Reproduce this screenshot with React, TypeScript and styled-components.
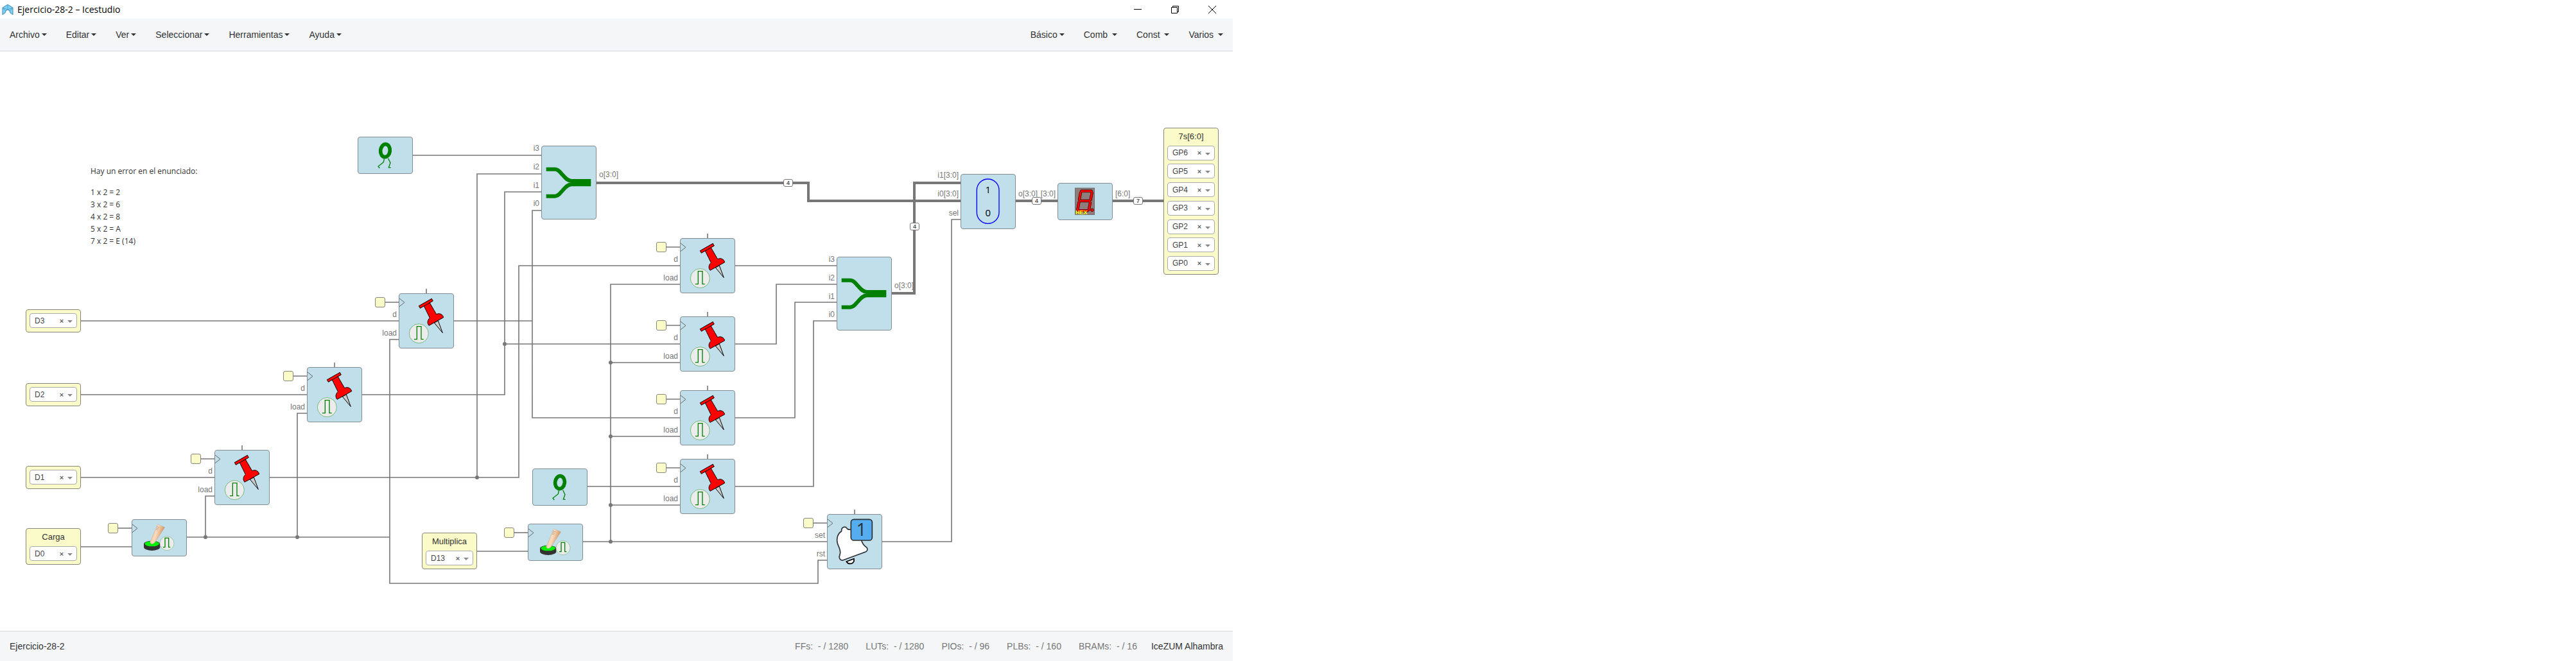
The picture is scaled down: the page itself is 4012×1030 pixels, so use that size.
import React from "react";
import styled, { createGlobalStyle } from "styled-components";

const WIRE = "#777777";
const SANS = '"Liberation Sans", Arial, sans-serif';
const HUMANIST = '"Open Sans", "Noto Sans", sans-serif';

const GlobalStyle = createGlobalStyle`
  * { box-sizing: border-box; }
  body { margin: 0; background: #ffffff; color: #333333; font-family: ${SANS}; font-size: 14px; }
  button, select { font: inherit; color: inherit; margin: 0; padding: 0; border: 0; background: none; }
`;

const Shell = styled.div`
  display: flex;
  flex-direction: column;
  max-width: 1920px;
  min-height: 100vh;
`;

const TitleBar = styled.header`
  display: flex;
  align-items: center;
  height: 29px;
  padding: 0 3px;
  background: #ffffff;
  color: #000000;
`;

const WindowTitle = styled.h1`
  flex: 1;
  margin: 0 0 0 6px;
  font: 400 14px/20px ${HUMANIST};
`;

const CaptionButton = styled.button`
  display: flex;
  align-items: center;
  justify-content: center;
  width: 58px;
  height: 29px;
`;

const MenuBar = styled.nav`
  display: flex;
  justify-content: space-between;
  height: 51px;
  background: #f4f6f8;
  border-bottom: 1px solid #d3d6d9;
`;

const MenuGroup = styled.div`
  display: flex;
`;

const MenuButton = styled.button`
  display: flex;
  align-items: center;
  padding: 0 15px;
  line-height: 20px;
  white-space: pre;
`;

const Caret = styled.span<{ $muted?: boolean }>`
  width: 0;
  height: 0;
  margin-left: ${(p) => (p.$muted ? "5px" : "3px")};
  margin-top: ${(p) => (p.$muted ? "3px" : "0")};
  border: 4px solid transparent;
  border-top-color: ${(p) => (p.$muted ? "#888888" : "#333333")};
  border-bottom: 0;
`;

const Canvas = styled.main`
  position: relative;
  flex: 1;
  min-height: 860px;
  overflow: hidden;
  background: #ffffff;
`;

const WireLayer = styled.svg`
  position: absolute;
  inset: 0;
  width: 100%;
  height: 100%;
`;

interface Place {
  $x: number;
  $y: number;
}

const Note = styled.div<Place>`
  position: absolute;
  left: ${(p) => p.$x}px;
  top: ${(p) => p.$y}px;
  font: 400 12px/19px ${HUMANIST};
  p { margin: 0 0 14px; }
`;

const Block = styled.div<Place & { $h: number }>`
  position: absolute;
  left: ${(p) => p.$x}px;
  top: ${(p) => p.$y}px;
  width: 86px;
  height: ${(p) => p.$h}px;
  border: 1px solid #838c90;
  border-radius: 4px;
  background: #c0dfeb;
  svg { display: block; margin: -1px; }
`;

const PinBlock = styled.div<Place & { $h: number }>`
  position: absolute;
  left: ${(p) => p.$x}px;
  top: ${(p) => p.$y}px;
  display: flex;
  flex-direction: column;
  justify-content: space-between;
  width: 86px;
  height: ${(p) => p.$h}px;
  padding: 5px;
  border: 1px solid #86867a;
  border-radius: 4px;
  background: #fbfac9;
`;

const PinTitle = styled.label`
  font-size: 13px;
  line-height: 16px;
  text-align: center;
`;

const PinField = styled.div`
  display: flex;
  align-items: center;
  height: 23px;
  padding: 0 6px 0 7px;
  border: 1px solid #aaaaaa;
  border-radius: 4px;
  background: #ffffff;
  color: #444444;
  font-size: 12px;
`;

const PinSelect = styled.select`
  flex: 1;
  min-width: 0;
  height: 21px;
  appearance: none;
  outline: none;
`;

const ClearButton = styled.button`
  width: 8px;
  font-size: 11px;
  font-weight: 700;
  line-height: 20px;
  color: #666666;
`;

const ClockStub = styled.div<Place>`
  position: absolute;
  left: ${(p) => p.$x}px;
  top: ${(p) => p.$y}px;
  width: 16px;
  height: 16px;
  border: 1px solid #86867a;
  border-radius: 3px;
  background: #fbfac9;
`;

const PortLabel = styled.span<Place & { $end?: boolean }>`
  position: absolute;
  left: ${(p) => p.$x}px;
  top: ${(p) => p.$y}px;
  transform: ${(p) => (p.$end ? "translate(-100%, -100%)" : "translate(0, -100%)")};
  font-size: 12px;
  line-height: 14px;
  color: ${WIRE};
`;

const BusSize = styled.span<Place>`
  position: absolute;
  left: ${(p) => p.$x}px;
  top: ${(p) => p.$y}px;
  width: 15px;
  height: 12px;
  border: 1px solid ${WIRE};
  border-radius: 3px;
  background: #ffffff;
  font-size: 9px;
  font-weight: 700;
  line-height: 10px;
  text-align: center;
  color: #555555;
`;

const StatusBar = styled.footer`
  display: flex;
  align-items: center;
  gap: 27px;
  height: 47px;
  padding: 0 15px;
  border-top: 1px solid #d3d6d9;
  background: #f4f6f8;
  line-height: 20px;
`;

const ProjectName = styled.span`
  margin-right: auto;
`;

const Resource = styled.span`
  color: ${WIRE};
  white-space: pre;
`;

const Board = styled.span`
  margin-left: -5px;
`;

/* Block artwork: three drawing units to one pixel. */

const Art = ({ h, children }: { h: number; children: React.ReactNode }) => (
  <svg width="86" height={h} viewBox={`0 0 258 ${h * 3}`} aria-hidden="true">
    {children}
  </svg>
);

const ClockMark = () => (
  <path d="M3 24L27 43L3 62" fill="none" stroke="#666" strokeWidth="3" />
);

const RegisterArt = () => (
  <Art h={86}>
    <ClockMark />
    <g stroke="#000" strokeWidth="3" strokeLinejoin="round">
      <path d="M166 138L184 128L205 185Z" fill="#ccc" />
      <path d="M117 58L144 43L176 98C190 91 206 98 209 113L141 151C131 139 135 124 145 115Z" fill="#f00" />
      <path d="M94 59L154 25L160 36L100 70Z" fill="#f00" />
    </g>
    <circle cx="94" cy="188" r="45" fill="#ececec" stroke="#3fa34a" strokeWidth="2" />
    <path d="M72 215H85V155H105V215H116" fill="none" stroke="green" strokeWidth="4" />
  </Art>
);

const JoinerArt = () => (
  <Art h={115}>
    <g fill="none" stroke="green" strokeWidth="18">
      <path d="M23 110H64C82 110 89 126 99 136C112 150 122 165 142 165H232" />
      <path d="M23 236H64C82 236 89 220 99 210C112 196 122 181 142 181H232" />
    </g>
  </Art>
);

const ZeroArt = () => (
  <Art h={58}>
    <g fill="none" stroke="green">
      <ellipse cx="129" cy="65" rx="22" ry="30" strokeWidth="17" transform="rotate(7 129 65)" />
      <path d="M124 103L121 119L96 139L103 147M143 101L153 122L145 144L155 145" strokeWidth="4" />
    </g>
  </Art>
);

const ButtonArt = () => (
  <Art h={58}>
    <defs>
      <linearGradient id="skin" x1="0" y1="0" x2="1" y2="0.4">
        <stop offset="0.2" stopColor="#e9bd94" />
        <stop offset="0.5" stopColor="#fbdcc0" />
        <stop offset="0.85" stopColor="#d9a072" />
      </linearGradient>
    </defs>
    <ClockMark />
    <path d="M57 116V130A38 17 0 0 0 133 130V116Z" fill="#333" />
    <ellipse cx="95" cy="116" rx="38" ry="15" fill="#333" />
    <ellipse cx="95" cy="115" rx="34" ry="12" fill="#0e0" />
    <path d="M122 24L155 38L112 104C102 119 84 120 87 104Z" fill="url(#skin)" stroke="#b98" strokeWidth="1" />
    <path d="M117 35L129 38M115 42L126 45M114 48L122 51" stroke="#a86" strokeWidth="2" />
    <circle cx="165" cy="113" r="33" fill="#ececec" stroke="#7cba84" strokeWidth="2" />
    <path d="M147 131H156V88H173V131H181" fill="none" stroke="green" strokeWidth="4" />
  </Art>
);

const MuxArt = () => (
  <Art h={86}>
    <rect x="76" y="24" width="104" height="208" rx="52" fill="none" stroke="#00f" strokeWidth="4" />
    <g fontFamily="Open Sans, Noto Sans, sans-serif" fontSize="45" textAnchor="middle">
      <text x="128" y="91">1</text>
      <text x="128" y="199">0</text>
    </g>
  </Art>
);

const SEGMENTS = "M112 38H158M108 46L102 78M161 46L155 78M106 84H149M100 91L94 125M153 91L147 125M98 130H140";

const HexArt = () => (
  <Art h={58}>
    <rect x="82" y="24" width="91" height="124" fill="#8f7d7d" stroke="#555" strokeWidth="2" />
    <path d={SEGMENTS} stroke="#200" strokeWidth="13" strokeLinecap="round" />
    <path d={SEGMENTS} stroke="#f00" strokeWidth="9" strokeLinecap="round" />
    <circle cx="162" cy="127" r="7" fill="#f00" stroke="#200" strokeWidth="2" />
    <text x="84" y="146" fontFamily="Liberation Sans, sans-serif" fontWeight="700" fontSize="27" fill="#ff0">HEX</text>
  </Art>
);

const FlagArt = () => (
  <Art h={86}>
    <ClockMark />
    <path
      d="M160 118C164 140 175 148 186 157C192 166 188 173 180 177L74 216C60 218 54 204 60 190C66 176 60 164 54 150C40 122 48 92 68 80C66 60 86 54 94 68C98 74 106 72 116 73Z"
      fill="#fff" stroke="#292f33" strokeWidth="5" strokeLinejoin="round"
    />
    <path d="M91 222L126 209C130 236 100 238 91 222Z" fill="#fff" stroke="#000" strokeWidth="5" />
    <rect x="112" y="25" width="99" height="98" rx="13" fill="#55acee" stroke="#292f33" strokeWidth="5" />
    <text x="161" y="103" fontFamily="Open Sans, Noto Sans, sans-serif" fontSize="82" textAnchor="middle" fill="#292f33">1</text>
  </Art>
);

type Kind = "register" | "joiner" | "zero" | "button" | "mux" | "hex" | "flag";

const KINDS: Record<Kind, { h: number; art: React.ReactNode }> = {
  register: { h: 86, art: <RegisterArt /> },
  joiner: { h: 115, art: <JoinerArt /> },
  zero: { h: 58, art: <ZeroArt /> },
  button: { h: 58, art: <ButtonArt /> },
  mux: { h: 86, art: <MuxArt /> },
  hex: { h: 58, art: <HexArt /> },
  flag: { h: 86, art: <FlagArt /> },
};

const BLOCKS: [Kind, number, number][] = [
  ["zero", 557, 133],
  ["joiner", 843, 147],
  ["register", 621, 377],
  ["register", 478, 492],
  ["register", 334, 621],
  ["button", 205, 729],
  ["register", 1059, 291],
  ["register", 1059, 413],
  ["register", 1059, 528],
  ["register", 1059, 635],
  ["joiner", 1303, 320],
  ["zero", 829, 650],
  ["button", 822, 736],
  ["flag", 1288, 721],
  ["mux", 1496, 191],
  ["hex", 1647, 205],
];

/* Input ports of each kind: label and height of its wire below the block's top. */
const INPUTS: Partial<Record<Kind, [string, number][]>> = {
  register: [["d", 43], ["load", 72]],
  joiner: [["i3", 14], ["i2", 43], ["i1", 72], ["i0", 100]],
  flag: [["set", 43], ["rst", 72]],
  mux: [["i1[3:0]", 12], ["i0[3:0]", 41], ["sel", 71]],
  hex: [["[3:0]", 27]],
};

const OUTPUTS: Partial<Record<Kind, [string, number]>> = {
  joiner: ["o[3:0]", 55],
  mux: ["o[3:0]", 41],
  hex: ["[6:0]", 27],
};

const CLOCKED: Kind[] = ["register", "button", "flag"];
const TICKED: Kind[] = ["register", "flag"];

const WIRES = [
  "M643 162H843",
  "M126 420H621",
  "M126 535H478",
  "M126 664H334",
  "M126 772H205",
  "M707 420H829M843 248H829V571H1059",
  "M564 535H786V219H843M786 456H1059",
  "M420 664H808V334H1059M743 664V191H843",
  "M291 757H607M320 757V693H334M463 757V564H478",
  "M621 449H607V829H1274V793H1288",
  "M915 678H1059",
  "M743 779H822",
  "M908 764H1288M951 764V363H1059M951 485H1059M951 600H1059M951 707H1059",
  "M1145 334H1303",
  "M1145 456H1209V363H1303",
  "M1145 571H1238V391H1303",
  "M1145 678H1267V420H1303",
  "M1374 764H1482V262H1496",
].join("");

const BUSES = "M929 205H1259V233H1496M1389 377H1424V205H1496M1582 233H1647M1733 233H1812";

const JOINTS: [number, number][] = [
  [786, 456], [743, 664], [320, 757], [463, 757],
  [951, 485], [951, 600], [951, 707], [951, 764],
];

const BUS_SIZES: [string, number, number][] = [
  ["4", 1220, 199],
  ["4", 1417, 267],
  ["4", 1607, 227],
  ["7", 1765, 227],
];

interface PinGroup {
  title?: string;
  pins: string[];
  x: number;
  y: number;
  h: number;
}

const PIN_GROUPS: PinGroup[] = [
  { pins: ["D3"], x: 40, y: 402, h: 36 },
  { pins: ["D2"], x: 40, y: 517, h: 36 },
  { pins: ["D1"], x: 40, y: 646, h: 36 },
  { title: "Carga", pins: ["D0"], x: 40, y: 743, h: 57 },
  { title: "Multiplica", pins: ["D13"], x: 657, y: 750, h: 57 },
  { title: "7s[6:0]", pins: ["GP6", "GP5", "GP4", "GP3", "GP2", "GP1", "GP0"], x: 1812, y: 119, h: 229 },
];

const PinBox = ({ title, pins, x, y, h }: PinGroup) => (
  <PinBlock $x={x} $y={y} $h={h}>
    {title && <PinTitle htmlFor={`pin-${pins[0]}`}>{title}</PinTitle>}
    {pins.map((pin) => (
      <PinField key={pin}>
        <PinSelect id={`pin-${pin}`} aria-label={title ? `${title} ${pin}` : pin} defaultValue={pin}>
          <option>{pin}</option>
        </PinSelect>
        <ClearButton type="button" aria-label={`Borrar ${pin}`}>×</ClearButton>
        <Caret $muted />
      </PinField>
    ))}
  </PinBlock>
);

const Menu = ({ items }: { items: string[] }) => (
  <MenuGroup>
    {items.map((item) => (
      <MenuButton key={item} type="button">
        {item}
        <Caret />
      </MenuButton>
    ))}
  </MenuGroup>
);

const Logo = () => (
  <svg width="18" height="18" viewBox="0 0 18 18" aria-hidden="true">
    <path d="M1 6L9 1L17 6V17L13 14L12 11L9 9L6 11L5 14L1 17Z" fill="#7fd0f2" stroke="#3a8db5" strokeWidth="1" />
    <path d="M1 6L9 9L17 6M6 11L1 6M12 11L17 6M9 1V9" fill="none" stroke="#4fa3cc" strokeWidth="1" />
  </svg>
);

const CAPTIONS: [string, string][] = [
  ["Minimizar", "M0 5.5H12"],
  ["Restaurar", "M.5 2.5H9.5V11.5H.5ZM2.5 2.5V.5H11.5V9.5H9.5"],
  ["Cerrar", "M0 0L12 12M12 0L0 12"],
];

const RESOURCES = ["FFs:  - / 1280", "LUTs:  - / 1280", "PIOs:  - / 96", "PLBs:  - / 160", "BRAMs:  - / 16"];
const NOTE_LINES = ["1 x 2 = 2", "3 x 2 = 6", "4 x 2 = 8", "5 x 2 = A", "7 x 2 = E (14)"];

export default function App() {
  return (
    <Shell>
      <GlobalStyle />
      <TitleBar>
        <Logo />
        <WindowTitle>Ejercicio-28-2 – Icestudio</WindowTitle>
        {CAPTIONS.map(([name, d]) => (
          <CaptionButton key={name} type="button" aria-label={name}>
            <svg width="12" height="12" viewBox="0 0 12 12">
              <path d={d} fill="none" stroke="#000" />
            </svg>
          </CaptionButton>
        ))}
      </TitleBar>
      <MenuBar>
        <Menu items={["Archivo", "Editar", "Ver", "Seleccionar", "Herramientas", "Ayuda"]} />
        <Menu items={["Básico", "Comb ", "Const ", "Varios "]} />
      </MenuBar>
      <Canvas>
        <WireLayer aria-hidden="true">
          <path d={WIRES} fill="none" stroke={WIRE} strokeWidth="1.6" />
          <path d={BUSES} fill="none" stroke={WIRE} strokeWidth="4" />
          {JOINTS.map(([x, y]) => (
            <circle key={`${x}-${y}`} cx={x} cy={y} r="3" fill={WIRE} />
          ))}
          {BLOCKS.filter(([kind]) => CLOCKED.includes(kind)).map(([kind, x, y]) => (
            <path
              key={`${x}-${y}`}
              d={`M${x - 21} ${y + 14}H${x}${TICKED.includes(kind) ? `M${x + 43} ${y - 7}V${y}` : ""}`}
              stroke={WIRE}
              strokeWidth="1.6"
            />
          ))}
        </WireLayer>
        <Note $x={141} $y={177}>
          <p>Hay un error en el enunciado:</p>
          {NOTE_LINES.map((line) => (
            <div key={line}>{line}</div>
          ))}
        </Note>
        {BLOCKS.map(([kind, x, y]) => (
          <React.Fragment key={`${x}-${y}`}>
            <Block $x={x} $y={y} $h={KINDS[kind].h}>
              {KINDS[kind].art}
            </Block>
            {CLOCKED.includes(kind) && <ClockStub $x={x - 37} $y={y + 6} />}
            {INPUTS[kind]?.map(([label, dy]) => (
              <PortLabel key={label} $x={x - 3} $y={y + dy - 3} $end>
                {label}
              </PortLabel>
            ))}
            {OUTPUTS[kind] && (
              <PortLabel $x={x + 90} $y={y + OUTPUTS[kind]![1] - 3}>
                {OUTPUTS[kind]![0]}
              </PortLabel>
            )}
          </React.Fragment>
        ))}
        {PIN_GROUPS.map((group) => (
          <PinBox key={group.pins[0]} {...group} />
        ))}
        {BUS_SIZES.map(([size, x, y]) => (
          <BusSize key={`${x}-${y}`} $x={x} $y={y}>
            {size}
          </BusSize>
        ))}
      </Canvas>
      <StatusBar>
        <ProjectName>Ejercicio-28-2</ProjectName>
        {RESOURCES.map((text) => (
          <Resource key={text}>{text}</Resource>
        ))}
        <Board>IceZUM Alhambra</Board>
      </StatusBar>
    </Shell>
  );
}
